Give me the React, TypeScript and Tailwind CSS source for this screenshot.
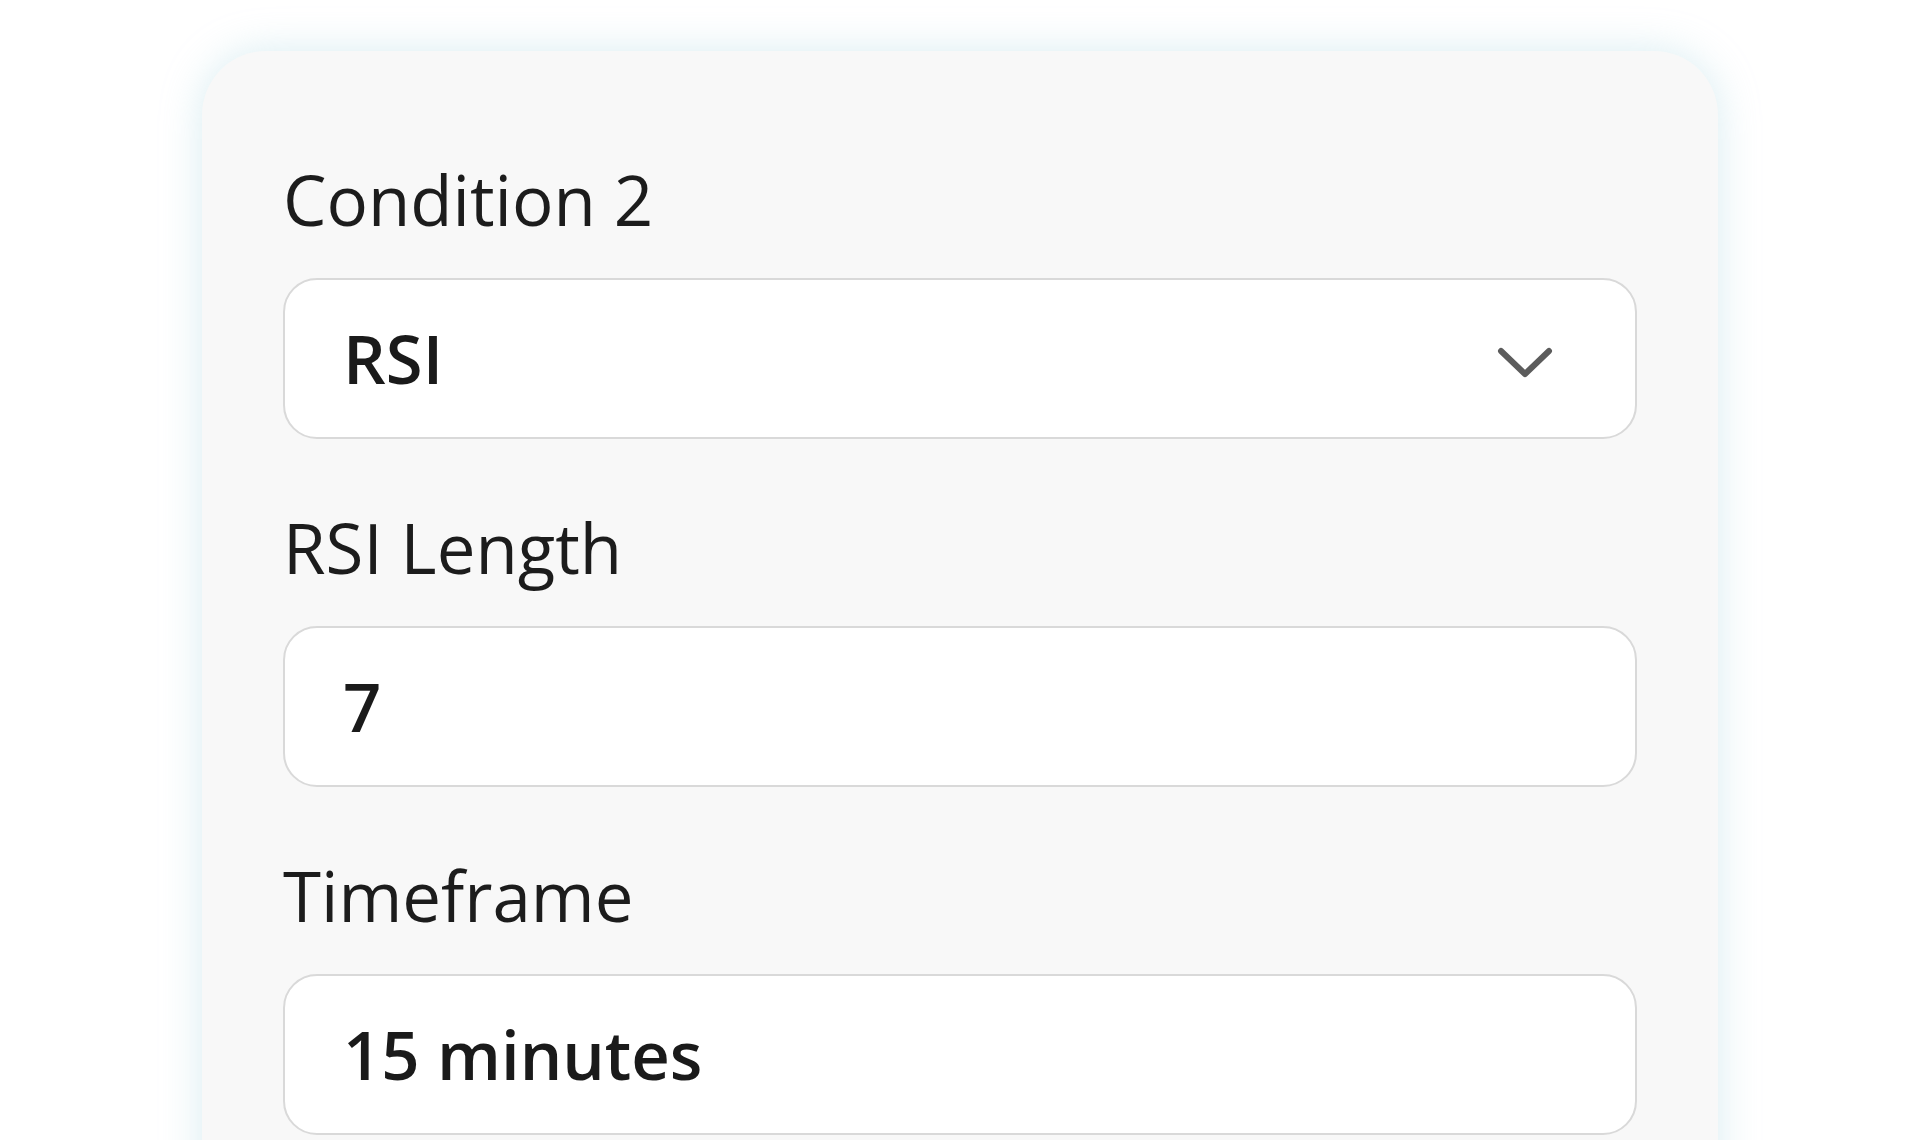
const fields = [
  { label: 'Condition 2', value: 'RSI', select: true },
  { label: 'RSI Length', value: '7', select: false },
  { label: 'Timeframe', value: '15 minutes', select: false },
]

function ChevronDown() {
  return (
    <svg width="56" height="32" viewBox="0 0 56 32" fill="none" className="shrink-0">
      <path d="M4 4 L28 27 L52 4" stroke="#5c5c5c" strokeWidth="6" strokeLinecap="round" strokeLinejoin="round" />
    </svg>
  )
}

function App() {
  return (
    <div
      className="w-[1920px] h-[1140px] overflow-hidden bg-white"
      style={{ fontFamily: '"Open Sans", "Liberation Sans", sans-serif' }}
    >
      <div className="pt-[51px] pl-[202px]">
        <div className="w-[1516px] rounded-[64px] bg-[#f8f8f8] px-[81px] pt-[114px] pb-[120px] shadow-[0_0_40px_rgba(160,210,222,0.4)]">
          <div className="flex flex-col gap-[74px]">
            {fields.map((f) => (
              <div key={f.label} className="flex flex-col gap-[44px]">
                <div className="text-[69px] leading-none font-normal text-[#1c1c1c]">{f.label}</div>
                <div className="h-[161px] rounded-[34px] border-2 border-[#d9d9d9] bg-white flex items-center justify-between pl-[58px] pr-[82px]">
                  <span className="text-[67px] leading-none font-semibold text-[#1a1a1a]">{f.value}</span>
                  {f.select && (
                    <div className="mt-2">
                      <ChevronDown />
                    </div>
                  )}
                </div>
              </div>
            ))}
          </div>
        </div>
      </div>
    </div>
  )
}

export default App
